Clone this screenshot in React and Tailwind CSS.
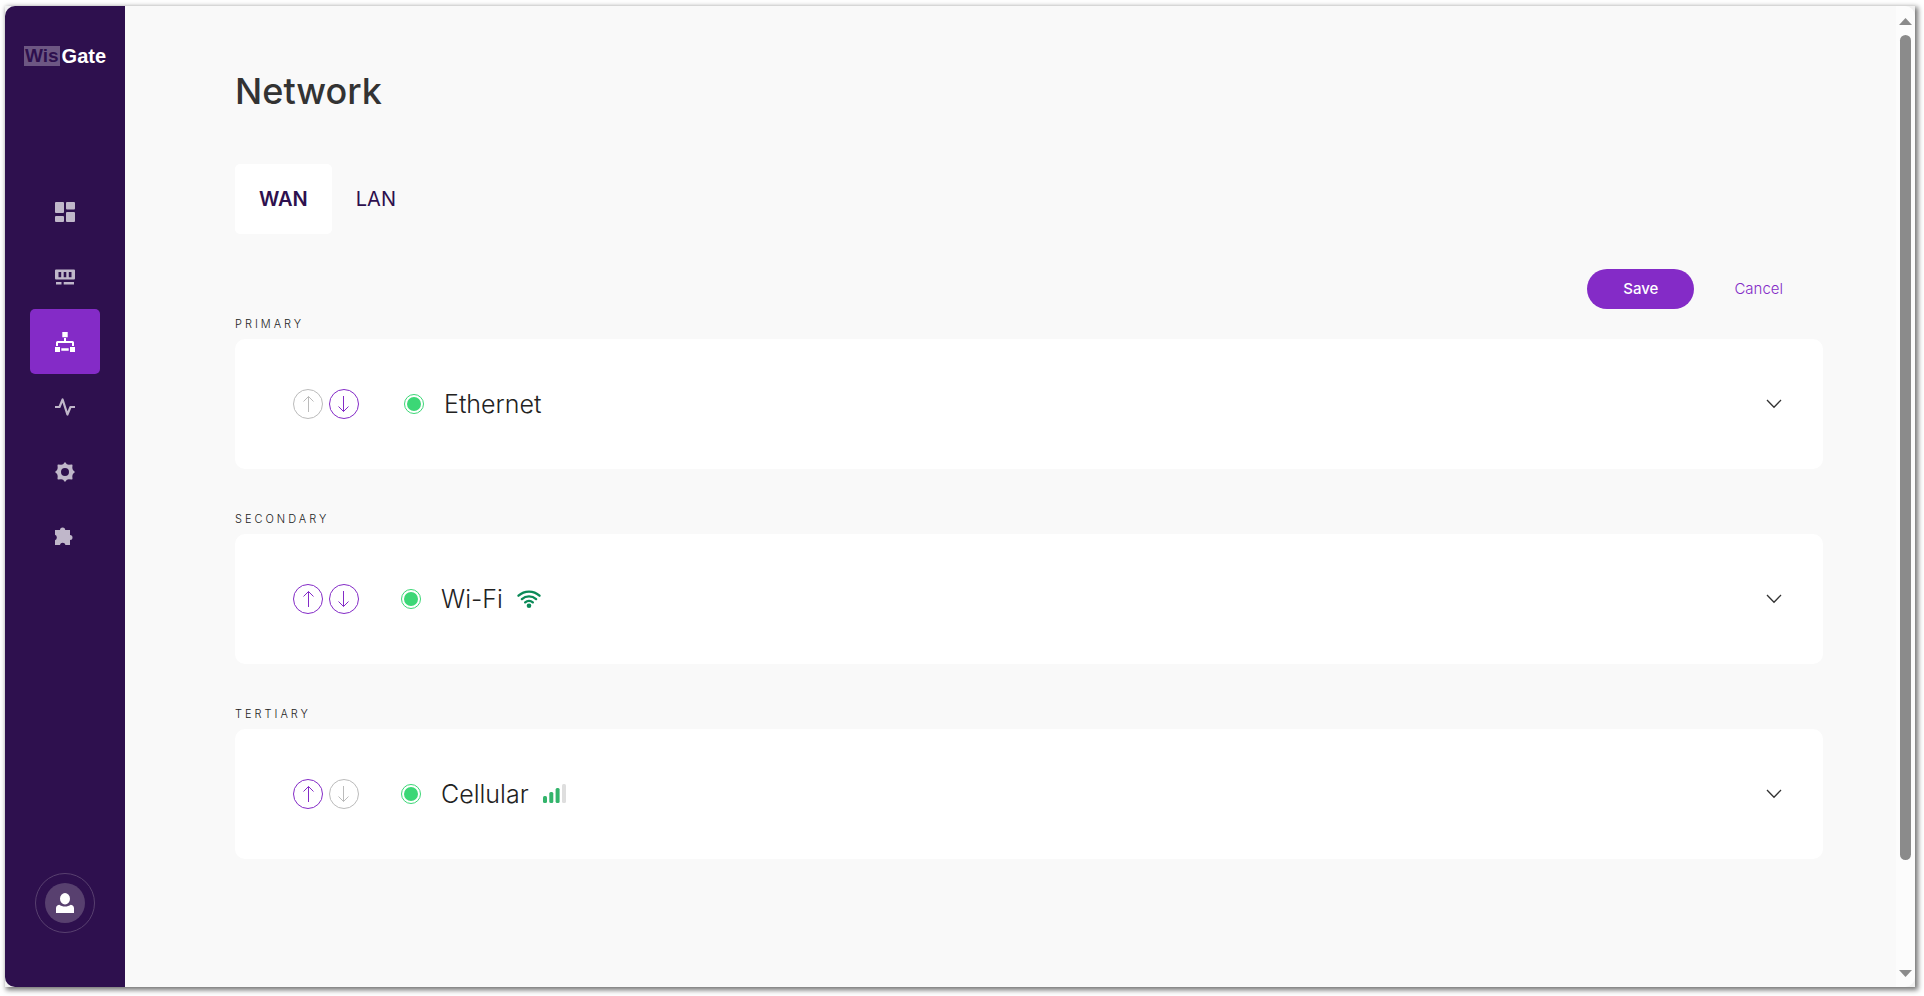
import { useState } from 'react';

const tabs = ["WAN", "LAN"];

const interfaces = [
  { id: "ethernet", priority: "Primary", name: "Ethernet", canMoveUp: false, canMoveDown: true },
  { id: "wifi", priority: "Secondary", name: "Wi-Fi", canMoveUp: true, canMoveDown: true },
  { id: "cellular", priority: "Tertiary", name: "Cellular", canMoveUp: true, canMoveDown: false },
];

const DashboardIcon = () => (
  <svg width="20" height="20" viewBox="0 0 20 20" fill="currentColor">
    <rect x="0" y="0" width="9" height="11" rx="1" />
    <rect x="11" y="0" width="9" height="7.5" rx="1" />
    <rect x="0" y="14" width="9" height="6" rx="1" />
    <rect x="11" y="10" width="9" height="10" rx="1" />
  </svg>
);

const GatewayIcon = () => (
  <svg width="20" height="20" viewBox="0 0 20 20" fill="currentColor">
    <path fillRule="evenodd" d="M1 2.5h18a1 1 0 0 1 1 1v8a1 1 0 0 1-1 1H1a1 1 0 0 1-1-1v-8a1 1 0 0 1 1-1zM3.5 5v5.3h2.7V5zM8.7 5v5.3h2.6V5zM13.8 5v5.3h2.7V5z" />
    <path d="M1 15h5.5v2.5H1zM8.7 15H19v2.5H8.7z" />
  </svg>
);

const NetworkIcon = () => (
  <svg width="20" height="20" viewBox="0 0 20 20" fill="currentColor">
    <path d="M7.3 0h5.4v5.2H7.3zM0 15h5v5H0zM15 15h5v5h-5zM6.3 16.2h7.4v2.6H6.3z" />
    <path d="M9 6h2v3h6.5a1.5 1.5 0 0 1 1.5 1.5V14h-2v-3H3v3H1v-3.5A1.5 1.5 0 0 1 2.5 9H9z" />
  </svg>
);

const ActivityIcon = () => (
  <svg width="20" height="20" viewBox="0 0 20 20" fill="none" stroke="currentColor" strokeWidth="2.2" strokeLinejoin="round">
    <path d="M0 10h4.5L7.6 2.5l4.8 15L15.5 10H20" />
  </svg>
);

const SettingsIcon = () => (
  <svg width="20" height="20" viewBox="0 0 20 20" fill="currentColor">
    <path fillRule="evenodd" d="M10 0l1.9 2.2 1.9.6 3.2-.4.5.5-.2 3.1.6 1.9L20 10l-2.100 2.100-.6 1.900.2 3.100-.5.5-3.200-.4-1.900.6L10 20l-1.900-2.200-1.900-.6-3.200.4-.5-.5.2-3.100-.6-1.900L0 10l2.100-2.100.6-1.900-.2-3.100.5-.5 3.200.4 1.900-.6zM10 6a4 4 0 1 0 0 8 4 4 0 0 0 0-8z" />
  </svg>
);

const ExtensionIcon = () => (
  <svg width="20" height="20" viewBox="0 0 20 20" fill="currentColor">
    <path d="M0 3h5a2.6 2.6 0 0 1 5.2 0H15v5a2.5 2.5 0 0 1 0 5v5h-4.5a2.9 2.9 0 0 0-5.6 0H0v-4.8a2.9 2.9 0 0 0 0-5.4z" />
  </svg>
);

const UserIcon = () => (
  <svg width="20" height="20" viewBox="0 0 20 20" fill="currentColor">
    <ellipse cx="10" cy="5.7" rx="5" ry="5.7" />
    <path d="M1 20v-4.5c0-2 1-3.2 3.2-3.7 3 2.4 8.6 2.4 11.6 0 2.2.5 3.2 1.7 3.2 3.7V20z" />
  </svg>
);

const ArrowIcon = ({ down }) => (
  <svg width="18" height="18" viewBox="0 0 18 18" fill="none" stroke="currentColor">
    {down ? (
      <path d="M8.5 1v15.5M3.5 11.5l5 5 5-5" />
    ) : (
      <path d="M9.5 17V1.5M4.5 6.5l5-5 5 5" />
    )}
  </svg>
);

const ChevronIcon = () => (
  <svg width="16" height="16" viewBox="0 0 16 16" fill="none" stroke="currentColor" strokeWidth="1.3">
    <path d="M1 4l7 7.3L15 4" />
  </svg>
);

const WifiIcon = () => (
  <svg width="24" height="18" viewBox="0 0 24 18" fill="none" stroke="currentColor" strokeWidth="2.3" strokeLinecap="round">
    <path d="M1.5 5.7a15.5 15.5 0 0 1 21 0M4.9 9.1a10.5 10.5 0 0 1 14.2 0M8.2 12.4a5.8 5.8 0 0 1 7.6 0" />
    <circle cx="12" cy="15.7" r="2.3" fill="currentColor" stroke="none" />
  </svg>
);

const SignalIcon = () => (
  <svg width="24" height="20" viewBox="0 0 24 20" fill="currentColor">
    <rect x="0" y="12" width="4" height="7" rx="1.5" />
    <rect x="6.3" y="8" width="4" height="11" rx="1.5" />
    <rect x="12.6" y="4" width="4" height="15" rx="1.5" />
    <rect x="19" y="0" width="4" height="19" rx="1.5" className="text-[#dedede]" />
  </svg>
);

const navItems = [
  { label: "Dashboard", icon: DashboardIcon },
  { label: "Gateway", icon: GatewayIcon },
  { label: "Network", icon: NetworkIcon },
  { label: "Diagnostics", icon: ActivityIcon },
  { label: "Settings", icon: SettingsIcon },
  { label: "Extensions", icon: ExtensionIcon },
];

const Sidebar = () => (
  <aside className="w-[120px] shrink-0 bg-[#2e104e] flex flex-col items-center pt-10 pb-[54px]">
    <a href="#home" className="flex items-center gap-0.5 font-['Liberation_Sans',sans-serif] leading-5 font-bold">
      <span className="bg-[#6d5783] text-[#2e104e] text-[19px] leading-5 px-px">Wis</span>
      <span className="text-white text-xl leading-5">Gate</span>
    </a>
    <nav className="mt-[113px] flex flex-col">
      {navItems.map(({ label, icon: Icon }) => (
        <a
          key={label}
          href={`#${label.toLowerCase()}`}
          aria-label={label}
          className={
            label === "Network"
              ? "w-[70px] h-[65px] rounded-[5px] flex items-center justify-center bg-[#842bc7] text-white"
              : "w-[70px] h-[65px] rounded-[5px] flex items-center justify-center text-[#c0b7ca]"
          }
        >
          <Icon />
        </a>
      ))}
    </nav>
    <button aria-label="Account" className="mt-auto size-[60px] rounded-full border border-[#58406f] flex items-center justify-center">
      <span className="size-10 rounded-full bg-[#58406f] text-white flex items-center justify-center">
        <UserIcon />
      </span>
    </button>
  </aside>
);

const MoveButton = ({ down, enabled, label }) => (
  <button
    aria-label={label}
    disabled={!enabled}
    className={
      enabled
        ? "size-[30px] rounded-full border border-[#842bc7] text-[#842bc7] flex items-center justify-center"
        : "size-[30px] rounded-full border border-[#bbbbbb] text-[#bbbbbb] flex items-center justify-center"
    }
  >
    <ArrowIcon down={down} />
  </button>
);

const InterfaceCard = ({ item }) => (
  <section className="mb-[42px]">
    <h2 className="mb-[7px] text-[11px] leading-4 tracking-[3px] font-light uppercase text-[#222222]">{item.priority}</h2>
    <div className="h-[130px] rounded-[10px] bg-white flex items-center pl-[58px] pr-[41px]">
      <div className="flex gap-1.5">
        <MoveButton enabled={item.canMoveUp} label={`Move ${item.name} up`} />
        <MoveButton down enabled={item.canMoveDown} label={`Move ${item.name} down`} />
      </div>
      <div className={item.id === "ethernet" ? "ml-[45px] flex items-center" : "ml-[42px] flex items-center"}>
        <span className="size-5 rounded-full border border-[#3cd776] flex items-center justify-center">
          <span className="size-3.5 rounded-full bg-[#3cd776]"></span>
        </span>
        <h3 className="ml-5 text-[25px] leading-8 font-light text-[#222222]">{item.name}</h3>
        {item.id === "wifi" && <span className="ml-3.5 text-[#0b8a58]"><WifiIcon /></span>}
        {item.id === "cellular" && <span className="ml-3.5 text-[#33b46b]"><SignalIcon /></span>}
      </div>
      <button aria-label={`Expand ${item.name}`} className="ml-auto text-[#333333]">
        <ChevronIcon />
      </button>
    </div>
  </section>
);

const ScrollTrack = () => (
  <div className="w-[19px] shrink-0 bg-[#fcfcfc] text-[#8b8b8b] flex flex-col items-center pt-3 pb-2.5">
    <svg width="13" height="7" viewBox="0 0 13 7" fill="currentColor"><path d="M0 7L6.5 0 13 7z" /></svg>
    <div className="grow w-[11px] mt-2.5 mb-2 flex flex-col">
      <div className="h-[89%] rounded-full bg-[#8b8b8b]"></div>
    </div>
    <svg width="13" height="7" viewBox="0 0 13 7" fill="currentColor"><path d="M0 0l6.5 7L13 0z" /></svg>
  </div>
);

const App = () => {
  const [activeTab, setActiveTab] = useState("WAN");

  return (
    <div className="min-h-screen bg-white flex pl-[5px] pt-1.5 pr-[9px] pb-[9px] font-['Inter',sans-serif]">
      <div className="grow flex bg-[#f1f1f1] shadow-[2px_2px_5px_1px_rgba(0,0,0,0.55)]">
        <div className="grow flex rounded-[10px] overflow-hidden">
          <Sidebar />
          <main className="grow bg-[#f9f9f9] pl-[110px] pr-[73px] pt-[60px]">
            <h1 className="text-4xl leading-[50px] font-medium text-[#333333]">Network</h1>
            <div className="mt-12 flex">
              {tabs.map((tab) => (
                <button
                  key={tab}
                  onClick={() => setActiveTab(tab)}
                  className={
                    activeTab === tab
                      ? "h-[70px] px-6 rounded-[5px] bg-white text-xl font-semibold text-[#2e104e]"
                      : "h-[70px] px-6 rounded-[5px] text-xl text-[#2e104e]"
                  }
                >
                  {tab}
                </button>
              ))}
            </div>
            <div className="mt-[35px] mb-[7px] flex justify-end">
              <button className="h-10 px-9 rounded-full bg-[#842bc7] text-[15px] font-medium text-white">Save</button>
              <button className="h-10 px-10 text-[15px] font-light text-[#842bc7]">Cancel</button>
            </div>
            {interfaces.map((item) => (
              <InterfaceCard key={item.id} item={item} />
            ))}
          </main>
          <ScrollTrack />
        </div>
      </div>
    </div>
  );
};

export default App;
